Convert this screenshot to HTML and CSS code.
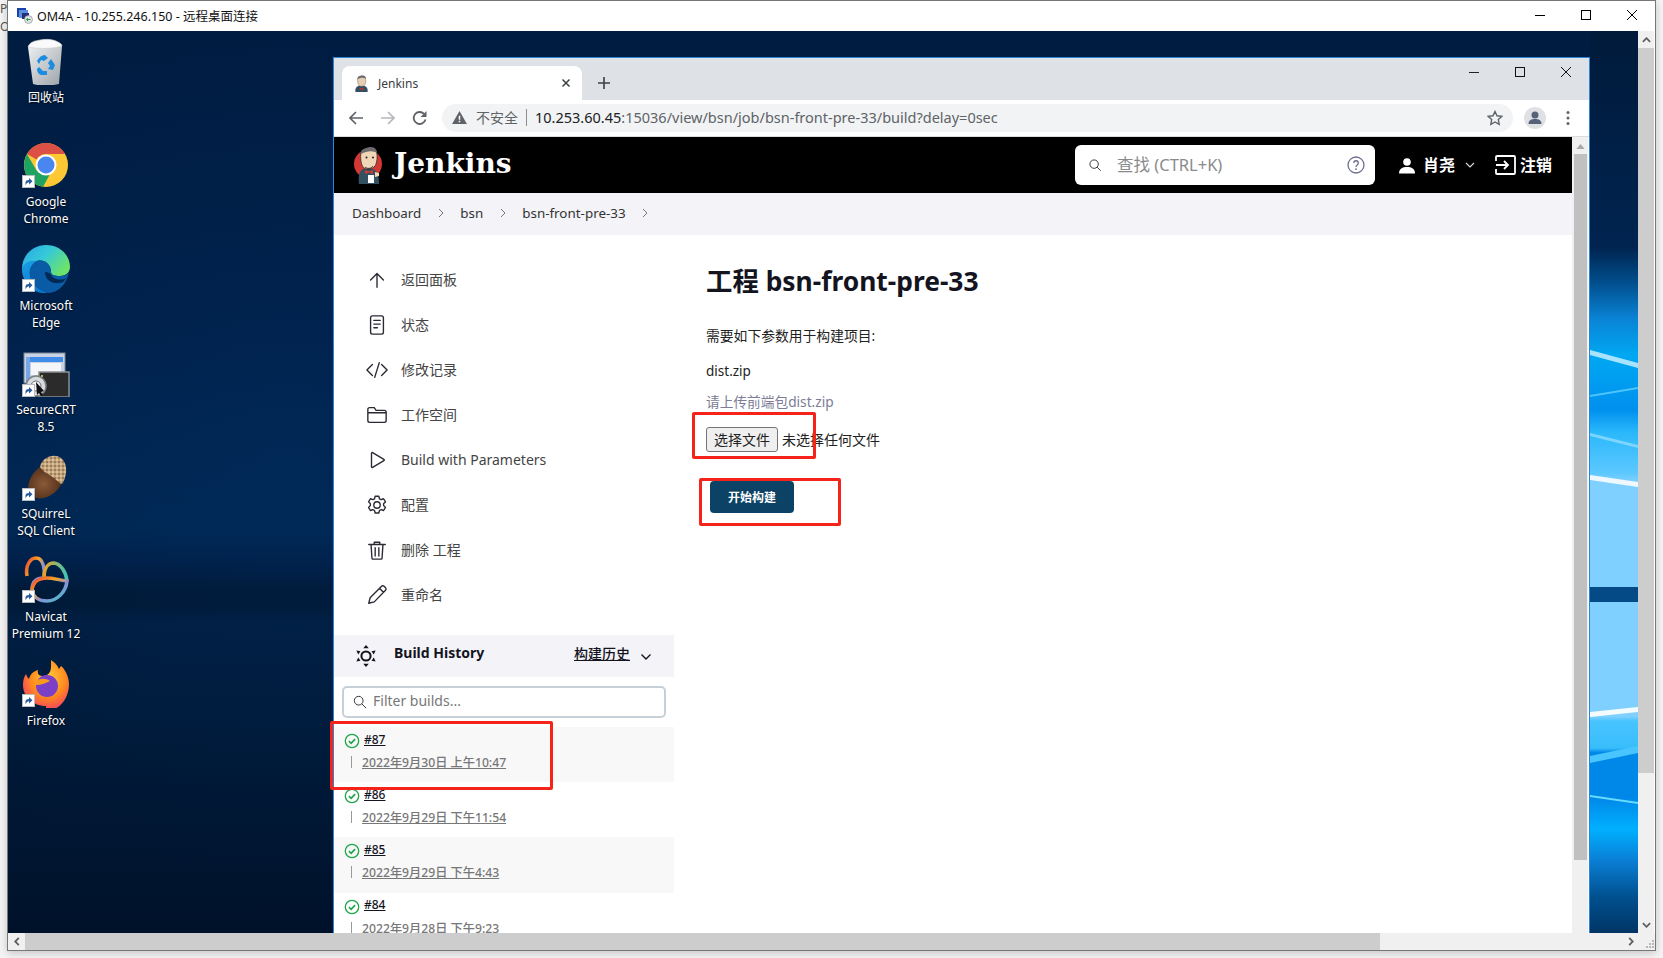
FILE: index.html
```html
<!DOCTYPE html>
<html lang="zh-CN">
<head>
<meta charset="utf-8">
<title>OM4A - 远程桌面连接</title>
<link rel="stylesheet" href="styles.css">
</head>
<body>
<svg class="defs" width="0" height="0" aria-hidden="true">
  <defs>
    <linearGradient id="edgeA" x1="0" y1="0" x2="1" y2="0.6"><stop offset="0" stop-color="#29a5e8"/><stop offset=".5" stop-color="#35c9d8"/><stop offset="1" stop-color="#6ce36a"/></linearGradient>
    <linearGradient id="edgeB" x1="0" y1="0" x2="0.6" y2="1"><stop offset="0" stop-color="#1a9fe6"/><stop offset="1" stop-color="#0a78d0"/></linearGradient>
    <linearGradient id="nav" x1="0" y1="0" x2="1" y2="1"><stop offset="0" stop-color="#ef3b3b"/><stop offset=".35" stop-color="#f5a623"/><stop offset=".6" stop-color="#8a8fd8"/><stop offset="1" stop-color="#2ed0c0"/></linearGradient>
    <linearGradient id="navG" x1="0" y1="0" x2="1" y2="0"><stop offset="0" stop-color="#f0a020"/><stop offset="1" stop-color="#38c8b8"/></linearGradient>
    <radialGradient id="acorn" cx=".45" cy=".55" r=".6"><stop offset="0" stop-color="#8a5a38"/><stop offset="1" stop-color="#4f2c18"/></radialGradient>
    <radialGradient id="fox" cx=".55" cy=".35" r=".75"><stop offset="0" stop-color="#ffcf3a"/><stop offset=".5" stop-color="#ff8a1f"/><stop offset="1" stop-color="#f0247a"/></radialGradient>
    <linearGradient id="bin" x1="0" y1="0" x2="1" y2="1"><stop offset="0" stop-color="#eef0f2"/><stop offset="1" stop-color="#9da3a8"/></linearGradient>
    <pattern id="scale" width="4" height="4" patternUnits="userSpaceOnUse"><rect width="4" height="4" fill="#c4a47c"/><circle cx="1" cy="1" r="1" fill="#8f7048"/><circle cx="3" cy="3" r="1" fill="#e0c8a4"/></pattern>
    <linearGradient id="wall" x1="0" y1="0" x2="0" y2="1">
      <stop offset="0" stop-color="#001a3a"/><stop offset=".24" stop-color="#002450"/><stop offset=".28" stop-color="#01508f"/>
      <stop offset=".32" stop-color="#0a84d6"/><stop offset=".36" stop-color="#00a8f2"/><stop offset=".42" stop-color="#0090ee"/>
      <stop offset=".445" stop-color="#2ab8fb"/><stop offset=".49" stop-color="#5cc8ff"/><stop offset=".5" stop-color="#80d0ff"/>
      <stop offset=".76" stop-color="#80d0ff"/><stop offset=".765" stop-color="#48c4ff"/><stop offset=".795" stop-color="#38bdfb"/>
      <stop offset=".8" stop-color="#0088e8"/><stop offset=".85" stop-color="#0088e8"/><stop offset=".885" stop-color="#00b0ff"/>
      <stop offset=".92" stop-color="#0a7ed4"/><stop offset=".96" stop-color="#00508f"/><stop offset="1" stop-color="#003565"/>
    </linearGradient>
    <symbol id="jenkins" viewBox="0 0 30 38">
      <circle cx="15" cy="18" r="14" fill="#d33833"/>
      <path d="M6 38c-1-7 0-13 4-15l10 0c5 2 6 8 6 15z" fill="#335061"/>
      <path d="M8 6c1-4 12-6 15-1 2 4 1 12-1 15-2 3-8 4-11 2C8 20 7 11 8 6z" fill="#f0d6b7" stroke="#231f20" stroke-width=".7"/>
      <path d="M8 8c0-5 6-7 10-7 4 0 6 3 6 6-3-2-9-3-16 1z" fill="#6d6b6d"/>
      <path d="M12 21c2 2 6 2 8-1" fill="none" stroke="#231f20" stroke-width=".8"/>
      <circle cx="13.500" cy="11.500" r="1" fill="#231f20"/><circle cx="20" cy="11.500" r="1" fill="#231f20"/>
      <path d="M12 24l4 1.500 4-1.500v4l-4-1.500-4 1.500z" fill="#d33833"/>
      <path d="M15 29h6v8h-6z" fill="#fff"/><path d="M22 26l4 1v3l-4 1z" fill="#f0d6b7"/>
    </symbol>
    <symbol id="jenkins-fav" viewBox="0 0 30 36">
      <path d="M2 36c-1-7 2-12 8-13h10c6 1 9 6 8 13z" fill="#335061"/>
      <path d="M7 6c1-4 13-6 16-1 2 4 1 13-1 16-2 3-9 4-12 2C7 21 6 11 7 6z" fill="#e8cdb0" stroke="#4a4a4a" stroke-width=".8"/>
      <path d="M7 9c-1-6 6-8 10-8 5 0 8 3 7 7-4-3-10-3-17 1z" fill="#6d6b6d"/>
      <path d="M11 27l4 1.500 4-1.500v5l-4-1.500-4 1.500z" fill="#c8302c"/>
    </symbol>
    <symbol id="sc" viewBox="0 0 13 13">
      <rect x=".5" y=".5" width="12" height="12" fill="#fff" stroke="#b8bcc0"/>
      <path d="M3.500 10.500V7.500C3.500 5.800 5 5 7 5V3l3.500 3.200L7 9.400V7.200C5.500 7.200 4.500 8 3.500 10.500z" fill="#2b5a9e"/>
    </symbol>
    <symbol id="ok" viewBox="0 0 16 16">
      <circle cx="8" cy="8" r="6.700" fill="none" stroke="#1ea64a" stroke-width="1.300"/>
      <path d="M4.900 8.200l2.200 2.100 4-4.200" fill="none" stroke="#1ea64a" stroke-width="1.700"/>
    </symbol>
  </defs>
</svg>

<div class="bg-letters"><span>P</span><span>O</span></div>

<div class="rdp">
  <div class="rdp-title">
    <svg class="rdp-icon" viewBox="0 0 17 17"><rect x="1" y="1" width="9" height="9" fill="#1c3fa8"/><rect x="3" y="3" width="9" height="8" fill="#5b8fe0"/><rect x="6" y="6" width="7" height="6" fill="#24307a"/><circle cx="12.500" cy="12.500" r="4" fill="#dfe3e6" stroke="#888" stroke-width=".6"/><path d="M10.500 12.500h4M12 11l-1.500 1.500L12 14" fill="none" stroke="#2a9a3a" stroke-width="1"/></svg>
    <span class="rdp-name">OM4A - 10.255.246.150 - 远程桌面连接</span>
    <div class="rdp-controls">
      <svg class="ctl" viewBox="0 0 46 16"><path d="M18 8.500h10" stroke="#000" stroke-width="1" fill="none"/></svg>
      <svg class="ctl" viewBox="0 0 46 16"><rect x="18.500" y="3.500" width="9" height="9" fill="none" stroke="#000"/></svg>
      <svg class="ctl" viewBox="0 0 46 16"><path d="M18 3l10 10M28 3L18 13" fill="none" stroke="#000"/></svg>
    </div>
  </div>

  <div class="rdp-mid">
    <div class="desktop">
      <svg class="wall-strip" viewBox="0 0 48 902" preserveAspectRatio="none">
        <rect width="48" height="902" fill="url(#wall)"/>
        <path d="M0 319L48 332V337L0 324z" fill="#a8e4ff"/>
        <path d="M0 364L48 356V358L0 366z" fill="#5fd0ff" opacity=".8"/>
        <path d="M0 402L48 414V417L0 405z" fill="#8fdcff" opacity=".8"/>
        <path d="M0 444L48 451V456L0 449z" fill="#f0f8ff"/>
        <rect y="556" width="48" height="15" fill="#034a86"/>
        <path d="M0 681L48 676V681L0 686z" fill="#f4fbff"/>
        <path d="M0 764L48 771V773L0 766z" fill="#66dcff"/>
        <path d="M0 725L48 715V722L0 732z" fill="#48c4ff"/>
      </svg>

      <div class="icons">
        <div class="d-icon">
          <svg class="d-svg" viewBox="0 0 48 48">
            <g transform="translate(0 2)">
            <path d="M6 8l34-1-3 38c-8 2-20 2-26 0z" fill="url(#bin)"/>
            <path d="M6 8c2-6 8-6 12-7s12-1 16 1 6 3 6 5c-8 3-26 3-34 1z" fill="#fafafa" stroke="#c8ccd0" stroke-width=".6"/>
            <path d="M15 22c2-4 5-6 8-6l3 3-4 3-3-1-2 4zM29 20l4 6-2 5-5-1 2-3-2-3zM17 28l4 4h4v4h-6c-3-1-4-4-4-6z" fill="#1b8de0"/>
            </g>
          </svg>
          <span class="d-label">回收站</span>
        </div>
        <div class="d-icon">
          <svg class="d-svg" viewBox="0 0 48 48">
            <circle cx="24" cy="24" r="22" fill="#fcc934"/>
            <path d="M5 13A22 22 0 0 1 43 13H24A11 11 0 0 0 14.500 18.500z" fill="#dd5045"/>
            <path d="M5 13A22 22 0 0 0 21 45.800L30 29.500A11 11 0 0 1 14.500 29.500z" fill="#1fa361"/>
            <circle cx="24" cy="24" r="10.500" fill="#fff"/><circle cx="24" cy="24" r="8.500" fill="#4a86f0"/>
            <use href="#sc" x="0" y="34" width="13" height="13"/>
          </svg>
          <span class="d-label">Google<br>Chrome</span>
        </div>
        <div class="d-icon">
          <svg class="d-svg" viewBox="0 0 48 48">
            <path d="M0 24C0 10 11 0 24 0c14 0 24 10 24 22 0 6-5 9-10 9-6 0-9-1-9-4 0-8-7-13-14-11C8 18 1 21 0 24z" fill="url(#edgeA)"/>
            <path d="M0 24c1-6 8-9 15-8-5 3-8 8-7 14 1 8 8 15 18 18C12 50 0 38 0 24z" fill="url(#edgeB)"/>
            <path d="M15 16c7-2 14 3 14 11 0 3 3 4 9 4 4 0 7-1 9-4-2 12-11 21-21 21C16 45 9 38 8 30c-1-6 2-11 7-14z" fill="#0a5ba6"/>
            <path d="M23 27c6 0 6 4 9 6 4 2 9 2 12 0-1 3-4 5-7 5-7 1-14-3-14-11z" fill="#002a55"/>
            <use href="#sc" x="0" y="34" width="13" height="13"/>
          </svg>
          <span class="d-label">Microsoft<br>Edge</span>
        </div>
        <div class="d-icon">
          <svg class="d-svg" viewBox="0 0 48 48">
            <rect x="2" y="4" width="41" height="30" fill="#c8d2e4" stroke="#7d8794"/>
            <rect x="7" y="8" width="34" height="5" fill="#3f8de8"/><rect x="9" y="14" width="30" height="12" fill="#f4f6fa"/><rect x="4" y="8" width="4" height="28" fill="#77a6e6"/>
            <rect x="17" y="23" width="30" height="25" fill="#2b2b2b" stroke="#8a8f94" stroke-width="1.500"/>
            <circle cx="20" cy="27" r="1" fill="#f0e040"/>
            <circle cx="14" cy="37" r="10" fill="#d8dcdf" stroke="#7c8288" stroke-width="1.500"/><circle cx="14" cy="37" r="5" fill="#f4f4f4" stroke="#6c7278"/>
            <path d="M14 33l8 9-3 1 2 3-2 1-2-3-2 2z" fill="#111"/>
            <use href="#sc" x="0" y="35" width="13" height="13"/>
          </svg>
          <span class="d-label">SecureCRT<br>8.5</span>
        </div>
        <div class="d-icon">
          <svg class="d-svg" viewBox="0 0 48 48">
            <path d="M7 40c-3-8 2-20 12-27 6 6 14 12 21 17-5 12-24 22-33 10z" fill="url(#acorn)"/>
            <path d="M18 14C20 4 32 0 39 5c6 5 7 14 2 25-3 2-5-2-9-5-5-4-10-5-14-11z" fill="url(#scale)"/>
            <use href="#sc" x="0" y="35" width="13" height="13"/>
          </svg>
          <span class="d-label">SQuirreL<br>SQL Client</span>
        </div>
        <div class="d-icon">
          <svg class="d-svg" viewBox="0 0 48 48">
            <path d="M5 20C3 10 8 2 14 2c7 0 9 10 8 20-7 0-12 2-12 12" fill="none" stroke="url(#nav)" stroke-width="3.500"/>
            <path d="M22 22c0-8 3-15 10-15 7 1 12 9 13 18" fill="none" stroke="url(#navG)" stroke-width="3.500"/>
            <path d="M10 34c1-8 7-12 15-12 7 0 11 2 20 3-1 11-10 20-20 20-8 0-14-4-15-11z" fill="none" stroke="url(#nav)" stroke-width="3.500"/>
            <use href="#sc" x="0" y="34" width="13" height="13"/>
          </svg>
          <span class="d-label">Navicat<br>Premium 12</span>
        </div>
        <div class="d-icon">
          <svg class="d-svg" viewBox="0 0 48 48">
            <path d="M24 46C10 46 1 36 1 25c0-5 1-8 3-11 1 3 2 4 3 5 1-5 5-8 9-9-1 4 1 6 5 6 5 0 8-4 8-9 0-3 0-5 0-7 6 4 7 7 8 9 1-1 1-2 2-3 4 3 8 11 8 18 0 16-11 27-23 27z" fill="url(#fox)"/>
            <circle cx="25" cy="26" r="11" fill="#7b3fc8"/><path d="M14 21c4-3 10-3 14 0-4 2-8 4-14 4z" fill="#f89a1c"/>
            <use href="#sc" x="0" y="34" width="13" height="13"/>
          </svg>
          <span class="d-label">Firefox</span>
        </div>
      </div>

      <div class="browser">
        <div class="tabbar">
          <div class="tab">
            <svg class="tab-fav"><use href="#jenkins-fav"/></svg>
            <span class="tab-title">Jenkins</span>
            <svg class="tab-x" viewBox="0 0 10 10"><path d="M1.500 1.500l7 7M8.500 1.500l-7 7" stroke="#3c4043" stroke-width="1.500" fill="none"/></svg>
          </div>
          <svg class="tab-plus" viewBox="0 0 14 14"><path d="M7 1v12M1 7h12" stroke="#3c4043" stroke-width="1.600" fill="none"/></svg>
          <div class="win-controls">
            <svg class="wc" viewBox="0 0 46 12"><path d="M18 6.500h10" stroke="#222" fill="none"/></svg>
            <svg class="wc" viewBox="0 0 46 12"><rect x="18.500" y="1.500" width="9" height="9" fill="none" stroke="#111"/></svg>
            <svg class="wc" viewBox="0 0 46 12"><path d="M18 1l10 10M28 1L18 11" fill="none" stroke="#111"/></svg>
          </div>
        </div>
        <div class="toolbar">
          <svg class="nav-btn" viewBox="0 0 16 16"><path d="M15 8H2M8 2L2 8l6 6" fill="none" stroke="#5f6368" stroke-width="1.700"/></svg>
          <svg class="nav-btn" viewBox="0 0 16 16"><path d="M1 8h13M8 2l6 6-6 6" fill="none" stroke="#b4b7bb" stroke-width="1.700"/></svg>
          <svg class="nav-btn" viewBox="0 0 16 16"><path d="M13.500 9.500A6 6 0 1 1 12 3.800" fill="none" stroke="#5f6368" stroke-width="1.800"/><path d="M14.500 1v6h-6z" fill="#5f6368"/></svg>
          <div class="omni">
            <svg class="warn" viewBox="0 0 16 14"><path d="M8 0l8 14H0z" fill="#5f6368"/><path d="M7.200 5h1.600v4.500H7.200zM7.200 10.500h1.600V12H7.200z" fill="#fff"/></svg>
            <span class="unsafe">不安全</span>
            <span class="omni-sep"></span>
            <span class="url"><b class="host">10.253.60.45</b>:15036/view/bsn/job/bsn-front-pre-33/build?delay=0sec</span>
            <svg class="star" viewBox="0 0 16 16"><path d="M8 1.500l2 4.300 4.700.6-3.400 3.200.9 4.700L8 12l-4.200 2.300.9-4.700L1.300 6.400 6 5.800z" fill="none" stroke="#5f6368" stroke-width="1.400"/></svg>
          </div>
          <svg class="avatar" viewBox="0 0 22 22"><circle cx="11" cy="11" r="11" fill="#dfe1e5"/><circle cx="11" cy="8" r="3.500" fill="#56627a"/><path d="M4.500 17c0-4 3-5 6.500-5s6.500 1 6.500 5z" fill="#56627a"/></svg>
          <svg class="kebab" viewBox="0 0 4 16"><circle cx="2" cy="2.500" r="1.500" fill="#5f6368"/><circle cx="2" cy="8" r="1.500" fill="#5f6368"/><circle cx="2" cy="13.500" r="1.500" fill="#5f6368"/></svg>
        </div>

        <div class="viewport">
          <div class="page">
            <header class="jk-head">
              <svg class="jk-logo"><use href="#jenkins"/></svg>
              <span class="jk-word">Jenkins</span>
              <div class="jk-search">
                <svg class="jk-s-icon" viewBox="0 0 16 16"><circle cx="7" cy="7" r="4.800" fill="none" stroke="#333" stroke-width="1.100"/><path d="M10.500 10.500l4 4" stroke="#333" stroke-width="1.100"/></svg>
                <span class="jk-s-text">查找 (CTRL+K)</span>
                <svg class="jk-s-help" viewBox="0 0 18 18"><circle cx="9" cy="9" r="8" fill="none" stroke="#6e6e8e" stroke-width="1.300"/><path d="M6.800 7c0-3 4.500-3 4.500 0 0 2-2.300 1.800-2.300 4" fill="none" stroke="#6e6e8e" stroke-width="1.300"/><circle cx="9" cy="13.200" r=".9" fill="#6e6e8e"/></svg>
              </div>
              <svg class="jk-user" viewBox="0 0 16 16"><circle cx="8" cy="4.500" r="3.800" fill="#fff"/><path d="M0 16c0-5 3.500-6.500 8-6.500s8 1.500 8 6.500z" fill="#fff"/></svg>
              <span class="jk-name">肖尧</span>
              <svg class="jk-chev" viewBox="0 0 10 6"><path d="M1 1l4 4 4-4" fill="none" stroke="#ddd" stroke-width="1.100"/></svg>
              <svg class="jk-out" viewBox="0 0 21 20"><path d="M1 6V2a1 1 0 0 1 1-1h17a1 1 0 0 1 1 1v16a1 1 0 0 1-1 1H2a1 1 0 0 1-1-1v-4" fill="none" stroke="#fff" stroke-width="1.800"/><path d="M1 10h12M9 6l4 4-4 4" fill="none" stroke="#fff" stroke-width="1.800"/></svg>
              <span class="jk-name jk-logout">注销</span>
            </header>
            <nav class="crumbs">
              <span>Dashboard</span><svg class="crumb-chev" viewBox="0 0 6 10"><path d="M1 1l4 4-4 4" fill="none" stroke="#777"/></svg>
              <span>bsn</span><svg class="crumb-chev" viewBox="0 0 6 10"><path d="M1 1l4 4-4 4" fill="none" stroke="#777"/></svg>
              <span>bsn-front-pre-33</span><svg class="crumb-chev" viewBox="0 0 6 10"><path d="M1 1l4 4-4 4" fill="none" stroke="#777"/></svg>
            </nav>
            <div class="columns">
              <aside class="side">
                <ul class="tasks">
                  <li class="task"><svg class="t-icon" viewBox="0 0 24 24"><path d="M12 20V5M5 12l7-7 7 7"/></svg><span class="t-text">返回面板</span></li>
                  <li class="task"><svg class="t-icon" viewBox="0 0 24 24"><rect x="5" y="2" width="14" height="20" rx="2"/><path d="M8.500 7h7M8.500 11h7M8.500 15h4"/></svg><span class="t-text">状态</span></li>
                  <li class="task"><svg class="t-icon" viewBox="0 0 24 24"><path d="M7 6l-6 6 6 6M17 6l6 6-6 6M14.500 4l-5 16"/></svg><span class="t-text">修改记录</span></li>
                  <li class="task"><svg class="t-icon" viewBox="0 0 24 24"><path d="M2 6a2 2 0 0 1 2-2h5l2 3h9a2 2 0 0 1 2 2v9a2 2 0 0 1-2 2H4a2 2 0 0 1-2-2zM2 9.500h20"/></svg><span class="t-text">工作空间</span></li>
                  <li class="task"><svg class="t-icon" viewBox="0 0 24 24"><path d="M6 4.500v15a.8.8 0 0 0 1.200.6L19.500 12.700a.8.800 0 0 0 0-1.400L7.200 3.900A.8.800 0 0 0 6 4.500z"/></svg><span class="t-text">Build with Parameters</span></li>
                  <li class="task"><svg class="t-icon" viewBox="0 0 24 24"><circle cx="12" cy="12" r="3.500"/><path d="M10 2.500h4l.7 2.800 1.800.9 2.700-1 2 3.400-2.100 2 .1 1 0 1 2 2-2 3.400-2.700-1-1.800 1-.7 2.700h-4l-.7-2.700-1.800-1-2.700 1-2-3.400 2-2 0-1 0-1-2-2 2-3.400 2.700 1 1.800-.9z"/></svg><span class="t-text">配置</span></li>
                  <li class="task"><svg class="t-icon" viewBox="0 0 24 24"><path d="M3 6h18M9 6V3.500h6V6M5.500 6l1 15a1 1 0 0 0 1 1h9a1 1 0 0 0 1-1l1-15M10 9.500v9M14 9.500v9"/></svg><span class="t-text">删除 工程</span></li>
                  <li class="task"><svg class="t-icon" viewBox="0 0 24 24"><path d="M3 21l1.500-6L17 2.500a2 2 0 0 1 2.800 0l1.500 1.500a2 2 0 0 1 0 2.800L9 19.500zM15 5l4 4"/></svg><span class="t-text">重命名</span></li>
                </ul>
                <div class="hist-bar">
                  <svg class="hist-gear" viewBox="0 0 24 24"><circle cx="12" cy="12" r="5" fill="none" stroke="#14141f" stroke-width="2.200"/><path d="M12 0l3 3.500H9zM12 24l-3-3.500h6zM1.500 6l4.500.8-2.500 3.600zM22.500 18l-4.500-.8 2.500-3.600zM22.500 6l-2 4.400L18 6.800zM1.500 18l2-4.400L6 17.200z" fill="#14141f"/></svg>
                  <span class="hist-title">Build History</span>
                  <span class="hist-link">构建历史</span>
                  <svg class="hist-chev" viewBox="0 0 12 8"><path d="M1.500 1.500L6 6l4.500-4.500" fill="none" stroke="#14141f" stroke-width="1.400"/></svg>
                </div>
                <div class="filter">
                  <svg class="filter-icon" viewBox="0 0 16 16"><circle cx="6.500" cy="6.500" r="5" fill="none" stroke="#333" stroke-width="1.100"/><path d="M10 10l5 5" stroke="#333" stroke-width="1.100"/></svg>
                  <span class="filter-text">Filter builds...</span>
                </div>
                <div class="build alt">
                  <div class="b-top"><svg class="b-ok"><use href="#ok"/></svg><span class="b-num">#87</span></div>
                  <div class="b-date"><i class="b-bar"></i><span class="b-time">2022年9月30日 上午10:47</span></div>
                </div>
                <div class="build">
                  <div class="b-top"><svg class="b-ok"><use href="#ok"/></svg><span class="b-num">#86</span></div>
                  <div class="b-date"><i class="b-bar"></i><span class="b-time">2022年9月29日 下午11:54</span></div>
                </div>
                <div class="build alt">
                  <div class="b-top"><svg class="b-ok"><use href="#ok"/></svg><span class="b-num">#85</span></div>
                  <div class="b-date"><i class="b-bar"></i><span class="b-time">2022年9月29日 下午4:43</span></div>
                </div>
                <div class="build">
                  <div class="b-top"><svg class="b-ok"><use href="#ok"/></svg><span class="b-num">#84</span></div>
                  <div class="b-date"><i class="b-bar"></i><span class="b-time">2022年9月28日 下午9:23</span></div>
                </div>
              </aside>
              <main class="main">
                <h1 class="title">工程 bsn-front-pre-33</h1>
                <p class="intro">需要如下参数用于构建项目:</p>
                <p class="param">dist.zip</p>
                <p class="desc">请上传前端包dist.zip</p>
                <div class="file-row"><button class="file-btn" type="button">选择文件</button><span class="file-none">未选择任何文件</span></div>
                <button class="go" type="button">开始构建</button>
              </main>
            </div>
          </div>
          <div class="page-scroll">
            <svg class="ps-up" viewBox="0 0 10 6"><path d="M5 0l5 6H0z" fill="#a8a8a8"/></svg>
            <div class="ps-thumb"></div>
          </div>
        </div>
      </div>

      <i class="mark mark-file"></i>
      <i class="mark mark-go"></i>
      <i class="mark mark-build"></i>
    </div>

    <div class="vbar">
      <div class="sb-btn"><svg class="sb-arrow" viewBox="0 0 10 6"><path d="M1 5l4-4 4 4" fill="none" stroke="#606060" stroke-width="2"/></svg></div>
      <div class="vthumb"></div>
      <div class="sb-rest"></div>
      <div class="sb-btn"><svg class="sb-arrow" viewBox="0 0 10 6"><path d="M1 1l4 4 4-4" fill="none" stroke="#606060" stroke-width="2"/></svg></div>
    </div>
  </div>

  <div class="hbar">
    <div class="hb-btn"><svg class="hb-arrow" viewBox="0 0 6 10"><path d="M5 1L1 5l4 4" fill="none" stroke="#606060" stroke-width="2"/></svg></div>
    <div class="hthumb"></div>
    <div class="hb-rest"></div>
    <div class="hb-btn"><svg class="hb-arrow" viewBox="0 0 6 10"><path d="M1 1l4 4-4 4" fill="none" stroke="#606060" stroke-width="2"/></svg></div>
    <svg class="grip" viewBox="0 0 9 9"><path d="M7 0h2v2H7zM4 3h2v2H4zM7 3h2v2H7zM1 6h2v2H1zM4 6h2v2H4zM7 6h2v2H7z" fill="#b8b8b8"/></svg>
  </div>
</div>
</body>
</html>
```

FILE: styles.css
```css
* { box-sizing: border-box; }
html, body { margin: 0; height: 100%; }
body {
  width: 1663px; height: 958px; overflow: hidden; position: relative;
  background: #f4f4f4;
  font-family: "Noto Sans", "Noto Sans CJK SC", sans-serif;
  color: #14141f;
}
.defs { position: absolute; }
.bg-letters {
  position: absolute; left: 0; top: 0; width: 7px; overflow: hidden;
  display: flex; flex-direction: column; font-size: 12px; line-height: 18px; color: #555;
}

.rdp {
  position: absolute; left: 7px; top: 0; width: 1649px; height: 951px;
  border: 1px solid #777; background: #fff;
  box-shadow: 0 2px 8px rgba(0,0,0,.2);
  display: flex; flex-direction: column;
}
.rdp-title { height: 30px; flex: none; display: flex; align-items: center; padding: 0 0 2px 8px; background: #fff; }
.rdp-icon { width: 17px; height: 17px; }
.rdp-name { margin-left: 4px; font-size: 12.5px; color: #111; }
.rdp-controls { margin-left: auto; display: flex; }
.ctl { width: 46px; height: 16px; display: block; }
.rdp-mid { flex: 1; display: flex; min-height: 0; }

.desktop {
  position: relative; flex: none; width: 1630px; height: 902px; overflow: hidden;
  background:
    radial-gradient(520px 420px at 280px 420px, rgba(3,60,120,.2), rgba(3,60,120,0)),
    linear-gradient(180deg, #001c40 0, #001f48 300px, #002550 500px, #001e46 530px, #001733 560px, #001733 575px, #001c3e 590px, #001a3a 680px, #00122a 902px);
}
.wall-strip { position: absolute; right: 0; top: 0; width: 48px; height: 902px; display: block; }

.icons { position: absolute; left: 0; top: 6px; width: 76px; display: flex; flex-direction: column; }
.d-icon { height: 103.9px; display: flex; flex-direction: column; align-items: center; text-align: center; }
.d-svg { width: 48px; height: 48px; flex: none; }
.d-label { margin-top: 4px; font-size: 12px; line-height: 17px; color: #fff; text-shadow: 0 1px 2px rgba(0,0,0,.9); white-space: nowrap; }

.browser {
  position: absolute; left: 325px; top: 26px; width: 1257px; height: 876px;
  border: 1px solid #2a86d8; border-bottom: 0; background: #fff;
  display: flex; flex-direction: column;
}
.tabbar { height: 42px; flex: none; background: #dee1e6; display: flex; align-items: flex-end; padding-left: 8px; }
.tab {
  width: 240px; height: 34px; background: #fff; border-radius: 8px 8px 0 0;
  display: flex; align-items: center; padding: 0 11px 0 12px;
}
.tab-fav { width: 15px; height: 17px; }
.tab-title { margin-left: 9px; font-size: 12px; color: #3c4043; }
.tab-x { width: 10px; height: 10px; margin-left: auto; }
.tab-plus { width: 14px; height: 14px; margin: 0 0 10px 15px; }
.win-controls { margin-left: auto; align-self: flex-start; margin-top: 8px; display: flex; }
.wc { width: 46px; height: 12px; display: block; }

.toolbar { height: 37px; flex: none; background: #fff; border-bottom: 1px solid #dadce0; display: flex; align-items: center; padding-left: 14px; }
.nav-btn { width: 16px; height: 16px; margin-right: 16px; }
.omni {
  margin-left: -2px; width: 1071px; height: 28px; border-radius: 14px; background: #f1f3f4;
  display: flex; align-items: center; padding-left: 10px; margin-top: -1px;
}
.warn { width: 15px; height: 13px; }
.unsafe { margin: 0 0 1px 9px; font-size: 14px; color: #5f6368; }
.omni-sep { width: 1px; height: 17px; background: #8a8d91; margin: 0 8px; }
.url { margin-bottom: 2px; font-size: 14.5px; color: #5f6368; white-space: nowrap; }
.host { font-weight: 400; color: #202124; }
.star { width: 16px; height: 16px; margin-left: auto; margin-right: 10px; }
.avatar { width: 22px; height: 22px; margin-left: 11px; }
.kebab { width: 4px; height: 16px; margin-left: 20px; }

.viewport { flex: 1; display: flex; min-height: 0; }
.page { width: 1238px; flex: none; overflow: hidden; display: flex; flex-direction: column; }
.page-scroll { width: 16px; flex: none; background: #f0f0f0; display: flex; flex-direction: column; align-items: center; padding-top: 7px; }
.ps-up { width: 9px; height: 5px; flex: none; }
.ps-thumb { width: 13px; height: 706px; background: #c0c0c0; margin-top: 5px; }

.jk-head { height: 56px; flex: none; background: #000; display: flex; align-items: center; padding: 0 20px 0 19px; }
.jk-logo { width: 30px; height: 38px; flex: none; }
.jk-word { margin: -3px 0 0 11px; font: 700 28px/1 "DejaVu Serif", serif; color: #fff; }
.jk-search {
  margin-left: auto; width: 300px; height: 40px; background: #fff; border-radius: 6px;
  display: flex; align-items: center; padding: 0 10px 0 13px;
}
.jk-s-icon { width: 14px; height: 14px; }
.jk-s-text { margin: 0 0 3px 15px; font-size: 16.5px; color: #8a8a8a; }
.jk-s-help { width: 18px; height: 18px; margin-left: auto; }
.jk-user { width: 16px; height: 17px; margin-left: 24px; }
.jk-name { margin: 0 0 2px 8px; font-size: 16px; font-weight: 700; color: #fff; }
.jk-logout { margin-left: 4px; }
.jk-chev { width: 10px; height: 6px; margin-left: 10px; }
.jk-out { width: 21px; height: 20px; margin-left: 20px; }

.crumbs { height: 42px; flex: none; background: #f3f3f8; display: flex; align-items: center; padding: 0 0 2px 18px; gap: 16.5px; font-size: 13.4px; color: #333; }
.crumb-chev { width: 6px; height: 10px; }

.columns { flex: 1; display: flex; min-height: 0; }
.side { width: 340px; flex: none; padding-top: 22px; }
.tasks { list-style: none; margin: 0 0 18px; padding: 0; }
.task { height: 45px; display: flex; align-items: center; padding-left: 32px; font-size: 14px; color: #444; }
.t-text { margin-bottom: 1px; }
.t-icon { width: 22px; height: 22px; margin-right: 13px; fill: none; stroke: #2a2a35; stroke-width: 1.500; stroke-linejoin: round; stroke-linecap: round; flex: none; }

.hist-bar { height: 42px; background: #f3f3f8; display: flex; align-items: center; padding-left: 21px; }
.hist-gear { width: 22px; height: 22px; flex: none; margin-top: -1px; }
.hist-title { margin: 0 0 7px 17px; font-size: 14px; font-weight: 700; color: #14141f; }
.hist-link { margin: 0 0 6px auto; font-size: 14px; color: #14141f; text-decoration: underline; font-weight: 500; }
.hist-chev { width: 12px; height: 8px; margin: 1px 22px 0 10px; }
.filter {
  margin: 9px 8px; width: 324px; height: 32px; border: 2px solid #c6d0d6; border-radius: 5px;
  display: flex; align-items: center; padding: 0 0 3px 9px;
}
.filter-icon { width: 14px; height: 14px; margin-top: 3px; }
.filter-text { margin-left: 6px; font-size: 14px; color: #777; }
.build { height: 55.2px; padding: 3px 0 0 10px; overflow: hidden; }
.build.alt { background: #f8f8f8; }
.b-top { display: flex; align-items: center; height: 18px; }
.b-ok { width: 16px; height: 16px; margin: 4px 4px 0 0; }
.b-num { font-size: 12px; font-weight: 500; text-decoration: underline; color: #14141f; }
.b-date { display: flex; align-items: center; height: 18px; margin: 5px 0 0 7px; }
.b-bar { width: 1px; height: 12px; background: #999; margin-right: 10px; }
.b-time { font-size: 12.2px; font-weight: 500; color: #777; text-decoration: underline; white-space: nowrap; }

.main { flex: 1; padding: 29px 0 0 32px; }
.title { margin: 0; font-size: 26.4px; line-height: 34px; font-weight: 700; color: #14141f; }
.intro { margin: 28px 0 0; font-size: 13.8px; line-height: 20px; color: #222; }
.param { margin: 15px 0 0; font-size: 13.5px; line-height: 20px; color: #222; }
.desc { margin: 11px 0 0; font-size: 13.7px; line-height: 20px; color: #7c7c96; }
.file-row { margin-top: 15px; display: flex; align-items: center; height: 25px; }
.file-btn { width: 72px; height: 25px; padding: 0 0 2px; font: 14px "Noto Sans", "Noto Sans CJK SC", sans-serif; color: #222; background: #efefef; border: 1px solid #767676; border-radius: 3px; }
.file-none { margin: 0 0 2px 4px; font-size: 14px; color: #222; }
.go { display: block; margin: 29px 0 0 4px; width: 84px; height: 32px; padding: 0; border: 0; border-radius: 4px; background: #0b4265; color: #fff; font: 700 12px "Noto Sans", "Noto Sans CJK SC", sans-serif; }

.mark { position: absolute; border: 3px solid #f5231a; border-radius: 2px; pointer-events: none; }
.mark-file { left: 684px; top: 381px; width: 124px; height: 47px; }
.mark-go { left: 691px; top: 447px; width: 142px; height: 48px; }
.mark-build { left: 322px; top: 690px; width: 223px; height: 69px; }

.vbar { flex: none; width: 16px; background: #f0f0f0; display: flex; flex-direction: column; }
.sb-btn { height: 17px; flex: none; display: flex; align-items: center; justify-content: center; background: #f0f0f0; }
.sb-arrow { width: 9px; height: 6px; }
.vthumb { height: 725px; flex: none; background: #cdcdcd; }
.sb-rest { flex: 1; }
.hbar { height: 17px; flex: none; background: #f0f0f0; display: flex; position: relative; }
.hb-btn { width: 17px; flex: none; display: flex; align-items: center; justify-content: center; }
.hb-arrow { width: 6px; height: 9px; }
.hthumb { width: 1355px; flex: none; background: #cdcdcd; }
.hb-rest { flex: 1; }
.hb-btn:last-of-type { margin-right: 16px; }
.grip { position: absolute; right: 1px; bottom: 1px; width: 9px; height: 9px; }
```
